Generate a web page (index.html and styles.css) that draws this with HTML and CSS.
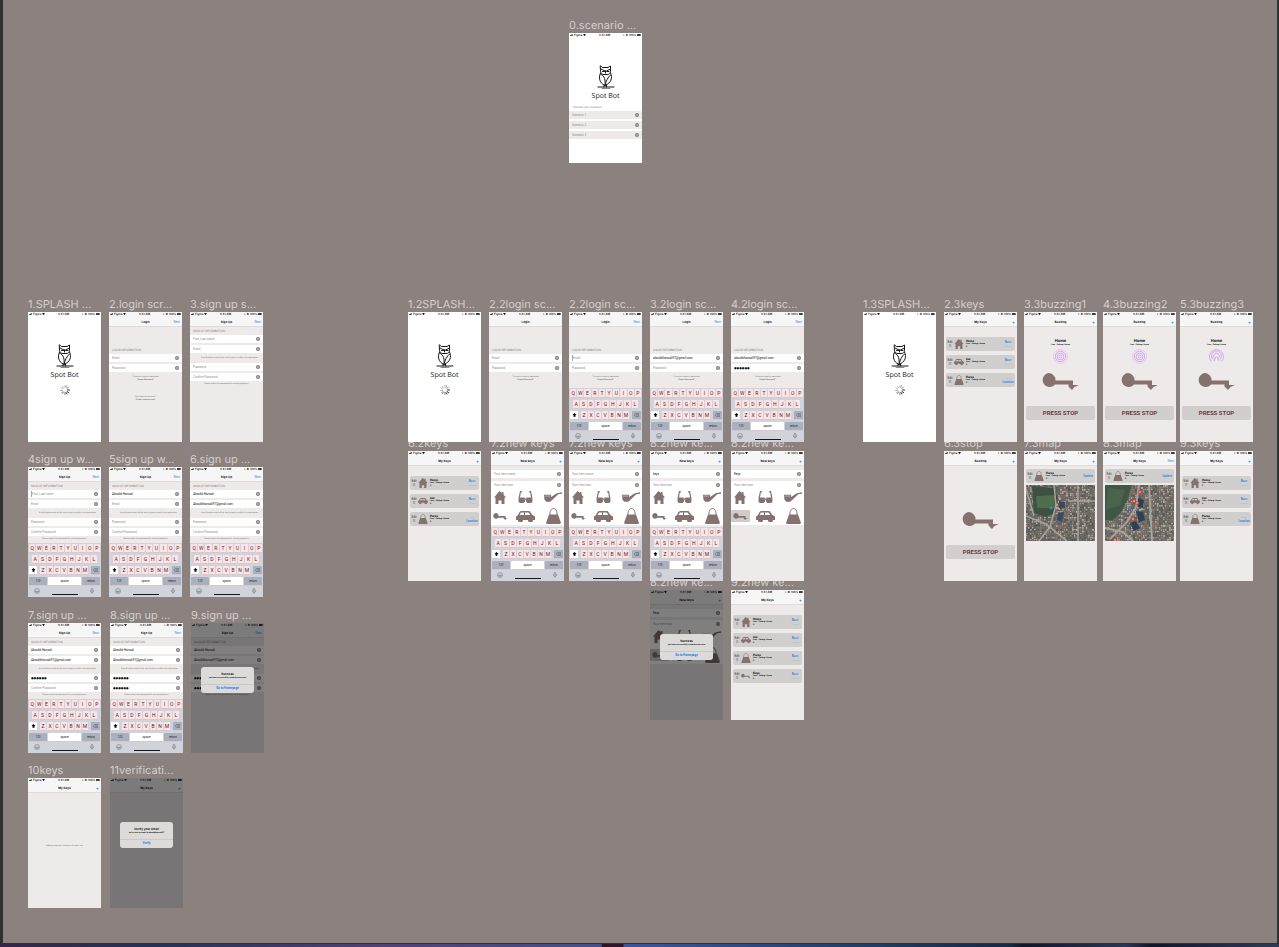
FILE: index.html
```html
<!DOCTYPE html>
<html lang="en">
<head>
<meta charset="utf-8">
<title>Spot Bot flows</title>
<link rel="stylesheet" href="styles.css">
</head>
<body>
<svg class="sprite" aria-hidden="true">
  <symbol id="owl" viewBox="0 0 36 48"><g fill="none" stroke="#161616" stroke-width="2" stroke-linejoin="round" stroke-linecap="round"><path d="M7 2l4 3h11l5-3v11c0 4-3 6-7 6h-6c-4 0-7-2-7-6zM8 8l8 4h3l8-4M11 13h4M20 13h4M17 12v4M7 16C3 24 4 36 16 41c12-5 16-15 11-25M7 18c9 4 10 12 9 23M27 20c-6 5-9 12-11 21M14 41v3M19 40v4M2 44h32M10 48h16"/></g></symbol>
  <symbol id="spin" viewBox="0 0 20 20"><g stroke-width="1.800" stroke-linecap="round"><path stroke="#111" d="M15 10h4M14 13l3.500 2.500M12 15l2 3"/><path stroke="#666" d="M14 7l3-3M10 15v4M7 14l-2 3"/><path stroke="#aaa" d="M12 5l1-4M10 5V1M7 6L5 3M5 8L2 6M5 11H1M6 13l-3 2"/></g></symbol>
  <symbol id="house" viewBox="0 0 24 26"><path d="M11 0l5 4V2h3v5l5 6h-3v13h-6v-7H9v7H3V13H0z"/></symbol>
  <symbol id="glasses" viewBox="0 0 30 26"><path d="M7 0v3H5L3 14h10v2h4v-2h10L25 3h-2V0h4l3 15v9l-3 2h-8l-3-3v-4h-2v4l-3 3H3l-3-2v-9L3 0z"/></symbol>
  <symbol id="pipe" viewBox="0 0 38 20"><path d="M0 5h15v5L27 2l11-2v3l-8 1-12 12-5 4H5l-4-4z"/><path d="M2 8h11" stroke="#fff"/></symbol>
  <symbol id="key" viewBox="0 0 74 34"><path d="M14 0a14 14 0 0 1 13 15h35v9h12l-9 4-5 6-7-7v-4H26A14 14 0 1 1 14 0z"/></symbol>
  <symbol id="car" viewBox="0 0 38 22"><path fill-rule="evenodd" d="M7 2l3-2h17l6 8 5 3v7h-4a5 5 0 0 1-10 0H14a5 5 0 0 1-10 0H0v-7l4-3zM10 3L7 8h9V3zM18 3v5h11l-4-5z"/><circle cx="9" cy="18" r="3.500"/><circle cx="29" cy="18" r="3.500"/></symbol>
  <symbol id="purse" viewBox="0 0 30 32"><path d="M6 13h18l6 17-2 2H2l-2-2z"/><path d="M8 17C7 5 11 1 15 1s8 4 7 16" fill="none" stroke="#85726f" stroke-width="2"/></symbol>
  <symbol id="clear" viewBox="0 0 10 10"><circle cx="5" cy="5" r="5" fill="#7d7d7d"/><path d="M3 3l4 4M7 3L3 7" stroke="#fff"/></symbol>
  <symbol id="rings" viewBox="0 0 30 30"><g fill="none" stroke="#c79cf0" stroke-width="1.600"><circle cx="15" cy="15" r="14" stroke="#dcc2f2"/><circle cx="15" cy="15" r="10.500"/><circle cx="15" cy="15" r="7"/><circle cx="15" cy="15" r="3"/></g></symbol>
  <symbol id="arcs" viewBox="0 0 30 30"><g fill="none" stroke="#c79cf0" stroke-width="1.600"><path d="M5 25a14 14 0 1 1 20 0M8 21a10 10 0 1 1 14 0M11 19a6 6 0 1 1 8 0M14 15l-4 9M16 15l4 9"/></g></symbol>
  <symbol id="smile" viewBox="0 0 12 12"><g fill="none" stroke="#676b72"><circle cx="6" cy="6" r="5"/><path d="M3 7q3 4 6 0zM4 4v1M8 4v1"/></g></symbol>
  <symbol id="mic" viewBox="0 0 12 14"><g fill="none" stroke="#676b72" stroke-width="1.300"><rect x="4" y="1" width="4" height="7" rx="2"/><path d="M2 6c0 6 8 6 8 0M6 10v3"/></g></symbol>
  <symbol id="shift" viewBox="0 0 12 12"><path d="M6 0l6 6H9v5H3V6H0z" fill="#000"/></symbol>
  <symbol id="back" viewBox="0 0 16 12"><path d="M5 1h10v10H5L1 6zM7 4l5 4M12 4L7 8" fill="none" stroke="#40444b" stroke-width="1.300"/></symbol>
  <symbol id="signal" viewBox="0 0 12 8"><path d="M0 5h2v3H0zM3 4h2v4H3zM6 2h2v6H6zM9 0h2v8H9z" fill="#000"/></symbol>
  <symbol id="wifi" viewBox="0 0 12 8"><path d="M0 2q6-4 12 0L6 8z" fill="#000"/></symbol>
  <symbol id="battery" viewBox="0 0 20 8"><rect width="18" height="8" rx="2"/><path d="M18.500 2h1.500v4h-1.500z"/></symbol>
</svg>
<main class="canvas" id="canvas"></main>
<footer class="dock"></footer>
<script src="app.js"></script>
</body>
</html>
```
FILE: styles.css
```css
* { box-sizing: border-box; }
body { margin: 0; height: 100vh; display: flex; flex-direction: column; font-family: Roboto, sans-serif; text-rendering: geometricPrecision; overflow: hidden; }
button, input { font: inherit; color: inherit; border: 0; padding: 0; margin: 0; background: none; min-width: 0; }
h2, h3, p { margin: 0; font: inherit; }
.sprite { position: absolute; width: 0; height: 0; }
.canvas { position: relative; flex: 1; background: #8b817f; border: solid #323031; border-width: 0 2px 1px 3px; }
.dock { height: 3px; background: linear-gradient(90deg, #352747 0%, #253058 12%, #50407b 30%, #454e8d 47%, #30142a 47.100%, #30142a 48.700%, #3a55a0 48.800%, #204273 65%, #152947 79%, #11152b 80%, #2c3658 88%, #11152b 90%, #303a58 100%); }
.frame { position: absolute; margin: 0; width: 73px; }
.name { position: absolute; left: 0; bottom: 100%; font: 11px/16px Inter, sans-serif; color: #d5cecd; white-space: nowrap; }
.screen { position: relative; z-index: 1; height: 130px; display: flex; flex-direction: column; background: #efeaea; font-size: 3px; line-height: 4px; color: #111; overflow: hidden; white-space: nowrap; }
.screen.white { background: #fff; }
.status { display: flex; justify-content: space-between; align-items: center; height: 4px; padding: 0 1px; background: #f7f6f6; font-weight: 500; }
.white .status { background: #fff; }
.status span { display: flex; align-items: center; gap: 1px; }
.status .sig { width: 3px; height: 2px; }
.status .bat { width: 4px; height: 2px; }
.nav { display: grid; grid-template-columns: 1fr 2fr 1fr; align-items: center; text-align: center; height: 11px; padding: 2px 2px 0; background: #f7f6f6; border-bottom: 1px solid #e0dcdc; font-family: Inter, sans-serif; }
.nav h2 { grid-column: 2; font-weight: 700; }
.nav button { text-align: right; color: #1583ee; }
.nav .plus { font-size: 5px; font-weight: 500; }
.brand { display: flex; flex-direction: column; align-items: center; margin-top: 28px; }
.owl { width: 18px; height: 24px; overflow: visible; }
.brand h3 { font: 7px/10px "Open Sans", sans-serif; margin-top: 3px; color: #222; }
.spin { width: 10px; height: 10px; margin-top: 4px; }
.scenarios { display: flex; flex-direction: column; gap: 2px; margin-top: 3px; }
.scenarios .heading { padding: 0 4px; height: 4px; }
.scenarios .field { background: #efeaea; }
.heading { height: 4px; padding: 0 3px; color: #8b8585; }
.form { display: flex; flex-direction: column; gap: 2px; }
.login { padding-top: 21px; }
.signup { padding-top: 2px; }
.newkey { padding-top: 4px; gap: 3px; }
.field { display: flex; align-items: center; justify-content: space-between; height: 8px; padding: 0 3px; background: #fff; }
.field input { width: 54px; height: 6px; line-height: 5px; outline: none; }
.field input::placeholder { color: #8d8d8d; opacity: 1; }
.field input.dots { font-family: "DejaVu Sans", sans-serif; }
.field input.caret { border-left: 1px solid #7bb3ee; }
.field svg { width: 4px; height: 4px; }
.hint { font-size: 2px; line-height: 3px; text-align: center; color: #67605f; }
.hint.line { line-height: 6px; padding-left: 6px; }
.hint.after { margin-top: 4px; }
.hint.more { margin-top: 14px; }
.hint a { color: #333; text-decoration: none; }
.icons { background: #fff; margin-top: -3px; padding: 0 2px; display: grid; grid-template-columns: 14px 1fr 18px; grid-template-rows: 16px 16px; column-gap: 5px; row-gap: 3px; height: 36px; align-items: center; justify-items: center; }
.icons span { display: flex; align-items: center; justify-content: center; }
.icons svg, .keyicon svg, .bigkey { fill: #85726f; }
.icons .house { width: 12px; height: 13px; }
.icons .glasses { width: 15px; height: 12px; }
.icons .pipe { width: 18px; height: 10px; }
.icons .key { width: 15px; height: 7px; }
.icons .car { width: 19px; height: 11px; }
.icons .purse { width: 15px; height: 16px; }
.icons .chosen { background: #cfcdcc; border-radius: 1px; width: 19px; height: 12px; }
.keyboard { margin-top: auto; height: 54px; padding: 1px 1px 0; background: #d0d3da; display: flex; flex-direction: column; gap: 2px; color: #5c1f26; font-size: 5px; }
.row { display: flex; gap: 1px; height: 9px; flex: none; }
.row:nth-child(2) { padding: 0 3px; }
.row button { flex: 1; height: 9px; line-height: 8px; border-radius: 1px; background: #fbe4e6; border-bottom: 1px solid #dcc5ca; display: flex; align-items: center; justify-content: center; }
.row .shift { flex: none; width: 8px; margin-right: 2px; background: #fff; }
.row .back { flex: none; width: 9px; margin-left: 2px; background: #a9b1bf; }
.row svg { width: 5px; height: 4px; }
.row .fn { flex: none; width: 18px; background: #a9b1bf; color: #222; font-size: 3px; }
.row .space { background: #fff; color: #222; font-size: 3px; }
.tools { display: flex; justify-content: space-between; align-items: flex-start; flex: 1; padding: 0 5px; }
.tools svg { width: 6px; height: 6px; }
.tools i { align-self: flex-end; width: 26px; height: 1px; margin-bottom: 2px; background: #15151c; }
.cards { display: flex; flex-direction: column; gap: 4px; padding: 10px 2px 0; }
.cards.top { padding-top: 3px; }
.card { display: grid; grid-template-columns: 6px 11px 1fr 12px; align-items: center; height: 14px; padding: 0 1px; border-radius: 2px; background: #d0cfce; }
.edit { display: flex; flex-direction: column; line-height: 4px; text-align: center; color: #333; }
.keyicon { display: flex; justify-content: center; }
.keyicon svg { width: 10px; height: 10px; }
.info { font-size: 2px; line-height: 3px; padding-left: 2px; font-weight: 700; }
.info h3 { font-size: 3px; line-height: 4px; font-weight: 900; }
.acts { display: flex; flex-direction: column; font-size: 3px; line-height: 4px; text-align: center; color: #9fb9d6; }
.acts button { font-size: 2px; }
.acts .on { color: #1583ee; font-size: 3px; font-weight: 500; }
.acts .low { font-size: 2px; }
.buzz { display: flex; flex-direction: column; align-items: center; height: 43px; padding-top: 11px; }
.buzz h3 { font: 700 4px/5px Inter, sans-serif; }
.buzz p { font-size: 2px; line-height: 4px; font-weight: 700; }
.buzz svg { width: 15px; height: 15px; margin-top: 2px; }
.bigkey { width: 37px; height: 17px; margin: 3px auto 16px; flex: none; }
.stop { margin: 0 2px; height: 14px; border-radius: 2px; background: #d0cfce; color: #6a3c40; font-weight: 700; font-size: 6px; line-height: 14px; text-align: center; }
.map { margin: 2px 2px 0; height: 56px; border-radius: 1px; overflow: hidden; flex: none; display: block; width: 69px; }
.empty { text-align: center; margin-top: 51px; font-size: 2px; color: #666; }
.shade { position: absolute; inset: 0; z-index: 2; background: rgba(0, 0, 0, .5); padding: 44px 10px; }
.modal { height: 26px; border-radius: 3px; background: #dddbda; display: flex; flex-direction: column; text-align: center; padding-top: 5px; }
.modal h3 { font: 700 3px/4px Inter, sans-serif; }
.modal p { font-size: 2px; line-height: 4px; font-weight: 700; }
.modal button { margin-top: 4px; border-top: 1px solid #cac8c8; color: #1583ee; font-weight: 700; line-height: 7px; }
```
FILE: app.js
```js
const use = (id, cls = id) => `<svg class="${cls}" aria-hidden="true"><use href="#${id}"/></svg>`;
const status = `<div class="status"><span>${use('signal', 'sig')}Figma ${use('wifi', 'sig')}</span><span>9:41 AM</span><span>◗ ✱ 100%${use('battery', 'bat')}</span></div>`;
const nav = (title, action = '') => `<header class="nav"><h2>${title}</h2>${action ? `<button${action === '+' ? ' class="plus"' : ''}>${action}</button>` : ''}</header>`;
const field = (hint, value = '', cls = '') => `<label class="field"><input class="${cls}" aria-label="${hint}" placeholder="${hint}" value="${value}">${use('clear')}</label>`;
const letters = s => [...s].map(c => `<button>${c}</button>`).join('');
const keyboard = `<div class="keyboard"><div class="row">${letters('QWERTYUIOP')}</div><div class="row">${letters('ASDFGHJKL')}</div><div class="row"><button class="shift" aria-label="Shift">${use('shift', 'up')}</button>${letters('ZXCVBNM')}<button class="back" aria-label="Delete">${use('back', 'del')}</button></div><div class="row"><button class="fn">123</button><button class="space">space</button><button class="fn">return</button></div><div class="tools">${use('smile')}<i></i>${use('mic')}</div></div>`;
const brand = `<div class="brand">${use('owl')}<h3>Spot Bot</h3></div>`;
const splash = { white: true, html: status + `<div class="brand">${use('owl')}<h3>Spot Bot</h3>${use('spin')}</div>` };
const modal = (title, text, action) => `<div class="shade"><div class="modal" role="dialog" aria-label="${title}"><h3>${title}</h3><p>${text}</p><button>${action}</button></div></div>`;
const dots = '●●●●●●';

function login({ next = true, mail = '', pass = '', caret = '', kb = false, more = false }) {
  return { html: status + nav('Login', next ? 'Next' : '') +
    `<div class="form login"><p class="heading">LOGIN INFORMATION</p>${field('Email', mail, caret)}${field('Password', pass, pass ? 'dots' : '')}</div>
    <p class="hint after">* Incorrect email or password<br><a href="#">Forgot Password?</a></p>` +
    (more ? '<p class="hint more">Don’t have an account?<br><a href="#">Create a new account</a></p>' : '') + (kb ? keyboard : '') };
}
function signup({ name = '', mail = '', pass = '', again = '', caret = '', kb = true, over = '' }) {
  return { html: status + nav('Sign Up', 'Next') +
    `<div class="form signup"><p class="heading">SIGN UP INFORMATION</p>${field('First, Last name', name, caret)}${field('Email', mail)}
    <p class="hint line">A verification email will be sent to you to confirm the registration</p>${field('Password', pass, pass ? 'dots' : '')}${field('Confirm Password', again, again ? 'dots' : '')}
    <p class="hint">Please match the password for security purposes</p></div>` + (kb ? keyboard : '') + over };
}
function newkey({ name = '', chosen = false, kb = true, over = '' }) {
  const icons = ['house', 'glasses', 'pipe', 'key', 'car', 'purse'];
  return { html: status + nav('New keys', '+') +
    `<div class="form newkey">${field('Your item name', name)}${field('Your item icon')}<div class="icons">${icons.map(i => `<span class="${chosen && i === 'key' ? 'chosen' : ''}">${use(i)}</span>`).join('')}</div></div>` + (kb ? keyboard : '') + over };
}
const card = (name, icon, acts) => `<article class="card"><div class="edit"><button>Edit</button><span>☰</span></div><div class="keyicon">${use(icon)}</div><div class="info"><h3>${name}</h3>Lion - Palangi Jisona<br>0</div><div class="acts">${acts}</div></article>`;
const buzz = '<button class="on">Buzz</button><button>Location</button>';
const locate = '<button class="low">Buzz</button><button class="on">Location</button>';
const keys = (extra = '') => ({ html: status + nav('My Keys', '+') + `<div class="cards">${card('Home', 'house', buzz)}${card('Car', 'car', buzz)}${card('Purse', 'purse', extra ? buzz : locate)}${extra}</div>` });
const buzzing = icon => ({ html: status + nav('Buzzing', '+') + `<div class="buzz">${icon ? `<h3>Home</h3><p>Lion - Palangi Jisona</p>${use(icon)}` : ''}</div>${use('key', 'bigkey')}<button class="stop">PRESS STOP</button>` });

function aerial(shift) {
  let n = 7 + shift;
  const rnd = () => (n = (n * 16807) % 2147483647) / 2147483647;
  const tones = ['#8b817a', '#a79c92', '#7d6d65', '#666b69', '#b3aca4', '#8c7067', '#585f5b', '#4f5b52'];
  let s = '';
  for (let y = 0; y < 56; y += 2) for (let x = 0; x < 70; x += 2) {
    s += `<rect x="${x}" y="${y}" width="${1 + rnd()}" height="${1 + rnd()}" fill="${tones[Math.floor(rnd() * 8)]}"/>`;
  }
  const land = shift
    ? '<path d="M0 0h27l-4 13-7 15-9 7H0z" fill="#3f5746"/><path d="M3 3l17 2-5 16-14 3z" fill="#4b634d"/><path d="M33 13l6 2-1 8-5-1zM31 26l7 1 2 8-6 2zM25 38l6-2 4 7-6 3z" fill="#2f4055"/><path d="M34 0l-3 22-9 15-17 17M0 43l18 4 10 9M44 0l3 56" fill="none" stroke="#a5a49c" stroke-width="2"/>'
    : '<path d="M6 1l22 2 4 10-4 16-9 3-11-4z" fill="#3c5044"/><path d="M10 11l20-1v13H11z" fill="#4f6e49"/><path d="M33 16l6 1v6l-6 1zM32 28l6-1-2 10-5-2z" fill="#3b4a5e"/><path d="M28 0l2 20-6 22-11 14M0 31l20 8 21 17M52 0v56M0 4l8 27M42 16h28" fill="none" stroke="#a5a49c" stroke-width="1.500"/>';
  const pins = shift ? [[35, 7], [29, 16], [32, 18], [28, 34], [10, 55]] : [[34, 14], [31, 20], [33, 24]];
  return `<svg class="map" viewBox="0 0 69 56" preserveAspectRatio="none" role="img" aria-label="Map"><rect width="69" height="56" fill="#6a6863"/>${s}${land}${pins.map(([x, y]) => `<circle cx="${x}" cy="${y}" r="${shift ? 2 : 1}" fill="#e04338"/><circle cx="${x}" cy="${y}" r=".7" fill="#fff"/>`).join('')}<circle cx="25" cy="23" r="1.500" fill="#3e82d0"/></svg>`;
}
const map = (shift, action) => ({ html: status + nav('My Keys', action) + `<div class="cards top">${card('Purse', 'purse', '<button class="on">Update</button>')}</div>${aerial(shift)}` });
const me = 'Aboubk Hansali', mail = 'Aboubkhansali97@gmail.com', small = 'aboubkhansali97@gmail.com';
const done = modal('Success', 'you have successfully created an account', 'Go to Homepage');

const frames = [
  [569, 33, '0.scenario ...', { white: true, html: status + brand + `<div class="scenarios"><p class="heading">Choose your scenario</p>${field('Scenario 1')}${field('Scenario 2')}${field('Scenario 3')}</div>` }],
  [28, 312, '1.SPLASH ...', splash],
  [109, 312, '2.login scr...', login({ more: true })],
  [190, 312, '3.sign up s...', signup({ kb: false })],
  [28, 467, '4sign up w...', signup({ caret: 'caret' })],
  [109, 467, '5sign up w...', signup({ name: me })],
  [190, 467, '6.sign up ...', signup({ name: me, mail })],
  [28, 623, '7.sign up ...', signup({ name: me, mail, pass: dots })],
  [110, 623, '8.sign up ...', signup({ name: me, mail, pass: dots, again: dots })],
  [191, 623, '9.sign up ...', signup({ name: me, mail, pass: dots, again: dots, kb: false, over: done })],
  [28, 778, '10keys', { html: status + nav('My Keys', '+') + '<p class="empty">Add your keys by clicking on the plus icon</p>' }],
  [110, 778, '11verificati...', { html: status + nav('My Keys', '+') + modal('Verify your email', 'we’ve sent an email to aboubkhansali97', 'Verify') }],
  [408, 312, '1.2SPLASH...', splash],
  [489, 312, '2.2login sc...', login({ next: false })],
  [569, 312, '2.2login sc...', login({ caret: 'caret', kb: true })],
  [650, 312, '3.2login sc...', login({ mail: small, kb: true })],
  [731, 312, '4.2login sc...', login({ mail: small, pass: dots, kb: true })],
  [408, 451, '6.2keys', keys()],
  [491, 451, '7.2new keys', newkey({})],
  [569, 451, '7.2new keys', newkey({})],
  [650, 451, '8.2new ke...', newkey({ name: 'keys' })],
  [731, 451, '8.2new ke...', newkey({ name: 'Keys', chosen: true, kb: false })],
  [650, 590, '8.2new ke...', newkey({ name: 'Keys', chosen: true, kb: false, over: done })],
  [731, 590, '9.2new ke...', keys(card('Keys', 'key', buzz))],
  [863, 312, '1.3SPLASH...', splash],
  [944, 312, '2.3keys', keys()],
  [1024, 312, '3.3buzzing1', buzzing('rings')],
  [1103, 312, '4.3buzzing2', buzzing('rings')],
  [1180, 312, '5.3buzzing3', buzzing('arcs')],
  [944, 451, '6.3stop', buzzing('')],
  [1024, 451, '7.3map', map(0, '+')],
  [1103, 451, '8.3map', map(9, 'Next')],
  [1180, 451, '9.3keys', keys()]
];
const origin = 3;
document.getElementById('canvas').innerHTML = frames.map(([x, y, name, s]) =>
  `<figure class="frame" style="left:${x - origin}px;top:${y}px"><figcaption class="name">${name}</figcaption><div class="screen${s.white ? ' white' : ''}">${s.html}</div></figure>`).join('');
```
